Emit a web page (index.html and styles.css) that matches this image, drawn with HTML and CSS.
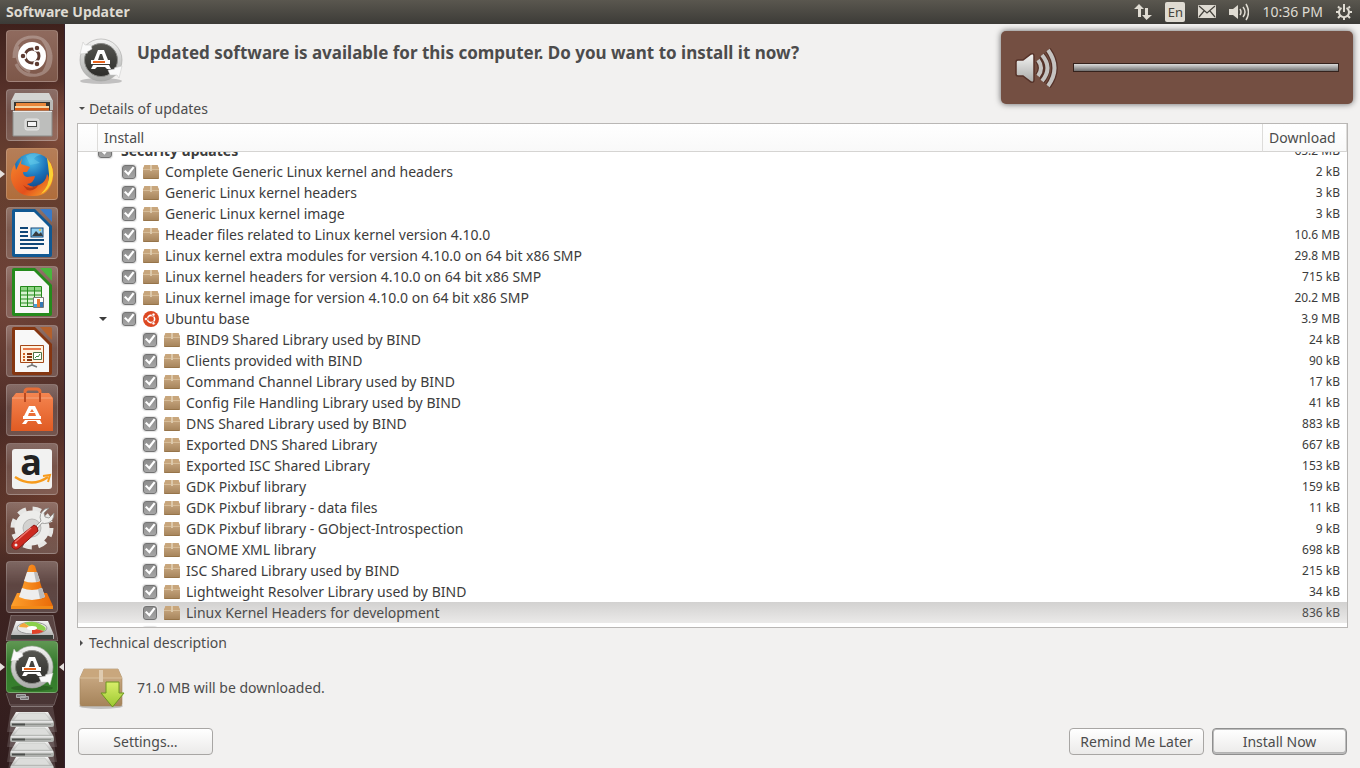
FILE: index.html
```html
<!DOCTYPE html>
<html lang="en">
<head>
    <meta charset="UTF-8">
    <meta name="viewport" content="width=device-width, initial-scale=1.0">
    <title>Software Updater</title>
    <link rel="stylesheet" href="styles.css">
</head>
<body>
    <!-- shared icons and gradients -->
    <svg class="defs" width="0" height="0" aria-hidden="true">
        <defs>
            <linearGradient id="boxGrad" x1="0" y1="0" x2="0" y2="1"><stop offset="0" stop-color="#d0b08a"/><stop offset="1" stop-color="#a5835a"/></linearGradient>
            <linearGradient id="metal" x1="0" y1="0" x2="0" y2="1"><stop offset="0" stop-color="#f4f4f3"/><stop offset="1" stop-color="#a9aaa8"/></linearGradient>
            <linearGradient id="dark" x1="0" y1="0" x2="0" y2="1"><stop offset="0" stop-color="#555550"/><stop offset="1" stop-color="#2d2d2a"/></linearGradient>
            <linearGradient id="bag" x1="0" y1="0" x2="0" y2="1"><stop offset="0" stop-color="#f58550"/><stop offset="1" stop-color="#e05b23"/></linearGradient>
            <radialGradient id="globe" cx=".45" cy=".2" r=".8"><stop offset="0" stop-color="#4cc3ea"/><stop offset=".5" stop-color="#1a70b8"/><stop offset="1" stop-color="#123a75"/></radialGradient>
            <linearGradient id="fox" x1="0" y1="0" x2="1" y2="1"><stop offset="0" stop-color="#f6882c"/><stop offset=".6" stop-color="#e4501c"/><stop offset="1" stop-color="#f9b02c"/></linearGradient>
            <linearGradient id="cone" x1="0" y1="0" x2="1" y2="0"><stop offset="0" stop-color="#ffa02c"/><stop offset="1" stop-color="#e96a08"/></linearGradient>
            <linearGradient id="green" x1="0" y1="0" x2="0" y2="1"><stop offset="0" stop-color="#d9ee6a"/><stop offset="1" stop-color="#9cc830"/></linearGradient>
        </defs>
        <symbol id="package" viewBox="0 0 16 14">
            <path d="M1.500 0h13L16 4v9q0 1-1 1H1q-1 0-1-1V4z" fill="url(#boxGrad)"/>
            <path d="M1.500 0h13L16 4H0z" fill="#c8a67c"/>
            <path d="M0 4.500h16" stroke="#d6bc98"/>
            <path d="M7 0h2v6H7z" fill="#dcc8aa"/>
            <path d="M.5 13.500h15" stroke="#967449"/>
        </symbol>
        <symbol id="ubuntu" viewBox="0 0 16 16">
            <circle cx="8" cy="8" r="8" fill="#dd4822"/>
            <circle cx="8" cy="8" r="3.600" fill="none" stroke="#fff" stroke-width="1.600"/>
            <g fill="#fff" stroke="#dd4822" stroke-width=".7"><circle cx="3" cy="8" r="1.600"/><circle cx="10.500" cy="3.700" r="1.600"/><circle cx="10.500" cy="12.300" r="1.600"/></g>
        </symbol>
        <symbol id="updater" viewBox="0 0 46 48">
            <ellipse cx="23" cy="44" rx="21" ry="3" fill="#000" opacity=".2"/>
            <circle cx="23" cy="23" r="21" fill="url(#metal)" stroke="#a5a5a3" stroke-width=".6"/>
            <circle cx="23" cy="23" r="16.500" fill="url(#dark)" stroke="#8a8a87"/>
            <path d="M2 17L5 5l2 3 6 0 1 4-5 3 1 1z" fill="#fafafa" stroke="#c6c6c4" stroke-width=".5"/>
            <path d="M44 29l-3 12-2-3-7 0-2-5 7-1-1-1z" fill="#fafafa" stroke="#c6c6c4" stroke-width=".5"/>
            <path d="M20 13h6l4 10h-4l-1-3h-4l-1 3h-4zm2 4-1 3h4l-1-3z" fill="#fff" fill-rule="evenodd"/>
            <path d="M13 23h19v4H13z" fill="#fff"/><path d="M15 24h12v2H15z" fill="#e8631c"/>
            <path d="M15 28h16l2 4h-4l-2-2h-8l-2 2h-4z" fill="#fff"/>
        </symbol>
        <symbol id="drive" viewBox="0 0 46 18">
            <path d="M7 2h32l6 10H1z" fill="url(#metal)"/>
            <path d="M10 3h26l5 7H5z" fill="#dcdddb" stroke="#c1c2bf" stroke-width=".6"/>
            <path d="M1 12h44v3q0 2-2 2H3q-2 0-2-2z" fill="#a4a6a2"/>
            <path d="M2 12h42" stroke="#fff"/>
            <path d="M3 14.500h13" stroke="#2d302d" stroke-width="2"/>
            <path d="M16 14.500h26" stroke="#7d807c"/>
        </symbol>
        <symbol id="drive-tile" viewBox="0 0 52 26">
            <path d="M5 0h42l4 26H1z" fill="#fff" opacity=".14"/>
            <path d="M5 .5h42" stroke="#fff" opacity=".3"/>
            <use href="#drive" x="3" y="4" width="46" height="18"/>
        </symbol>
    </svg>

    <header class="panel">
        <h1 class="panel-title">Software Updater</h1>
        <div class="indicators">
            <svg width="18" height="18" viewBox="0 0 18 18" fill="#dfdbd2"><path d="M5 1l5 5H7v8H4V6H0zM11 5h3v7h4l-5.500 5L8 12h3z"/></svg>
            <span class="lang">En</span>
            <svg width="18" height="14" viewBox="0 0 18 14"><rect width="18" height="13" rx="1" fill="#dfdbd2"/><path d="M1 1l8 7 8-7M1 12l5-6M17 12l-5-6" fill="none" stroke="#45433d" stroke-width="1.200"/></svg>
            <svg width="20" height="18" viewBox="0 0 20 18"><path d="M0 6h4l5-4v14l-5-4H0z" fill="#dfdbd2"/><path d="M11 6q2 3 0 6M14 4q4 5 0 10M17 1q5 8 0 16" fill="none" stroke="#dfdbd2" stroke-width="1.500"/></svg>
            <time class="clock">10:36 PM</time>
            <svg width="16" height="16" viewBox="0 0 16 16" fill="none" stroke="#dfdbd2" stroke-width="2"><path d="M5.500 3.800a5 5 0 1 0 5 0M8 0v8M3.500 4L2 2.500M12.500 4L14 2.500M3 8H0M13 8h3M4 12l-2 2M12 12l2 2M8 13v3"/></svg>
        </div>
    </header>

    <div class="desktop">
        <nav class="launcher" aria-label="Launcher">
            <a class="tile bfb" href="#" aria-label="Dash">
                <svg viewBox="0 0 52 52"><g fill="none" stroke="#fff" opacity=".25"><path d="M8 28Q8 7 27 7q15 0 18 18M10 34q6 13 21 11 15-3 14-20M12 16q-5 18 12 26M36 9q13 16 1 34" stroke-width="3"/></g><circle cx="26" cy="26" r="14" fill="#fff"/><circle cx="26" cy="26" r="7" fill="none" stroke="#5d3b31" stroke-width="3"/><g fill="#5d3b31" stroke="#fff" stroke-width="1.500"><circle cx="17" cy="26" r="3"/><circle cx="31" cy="18" r="3"/><circle cx="31" cy="34" r="3"/></g></svg>
            </a>
            <a class="tile" href="#" aria-label="Files">
                <svg viewBox="0 0 52 52"><path d="M9 4h34l4 8H5z" fill="#d3d4d2"/><path d="M5 11h42v10H5z" fill="#b9bab7"/><path d="M8 13h36v9H8z" fill="#383632"/><path d="M10 14h30v6H10z" fill="#e9873b"/><path d="M9 17h34v2H9z" fill="#f6d5a4"/><path d="M9 19h34v3H9z" fill="#d75b16"/><path d="M7 22h39v25H7z" fill="#bdbebc" stroke="#8b8c89"/><path d="M7 22.500h39" stroke="#e9e9e8"/><rect x="19" y="30" width="14" height="11" rx="2" fill="#d3d4d2" stroke="#e6e6e5"/><rect x="21.500" y="32.500" width="9" height="5" fill="#f4f4f4" stroke="#474845"/></svg>
            </a>
            <a class="tile firefox running" href="#" aria-label="Firefox">
                <svg viewBox="0 0 52 52"><circle cx="27" cy="25" r="20" fill="url(#globe)"/><path d="M20 8q7-5 16-1-6 0-8 4l6 4-10 2z" fill="#62c4e6" opacity=".6"/><path d="M42 11q7 8 5 20-4 18-21 17Q9 48 5 31q-1-8 4-15l1 6 6-12-1 6 6 2 3 1-3 5h-4q0 4 4 5l8-1q-1 7-8 8 6 5 12 1 7-3 8-11 3 4 1 8 5-7 3-16z" fill="url(#fox)"/><path d="M41 10q9 11 5 23-3 9-11 13 9-9 8-20l-1-9z" fill="#fbd033"/><path d="M17 37q7 6 16-1-4 8-12 6z" fill="#b83b16"/></svg>
            </a>
            <a class="tile" href="#" aria-label="LibreOffice Writer">
                <svg viewBox="0 0 52 52"><path d="M6 4q0-2 2-2h21l17 17v29q0 2-2 2H8q-2 0-2-2z" fill="#115892"/><path d="M34 2h10q2 0 2 2v11z" fill="#3a7ac7"/><path d="M9 5h19l15 15v27H9z" fill="#f8f8f8"/><path d="M14 21h8M14 25h8M14 29h8M14 33h24M14 37h24M14 41h18" stroke="#104778" stroke-width="2"/><rect x="25" y="21" width="12" height="9" fill="#8fd0f3" stroke="#104778"/><path d="M26 29l4-5 3 3 2-2 2 4z" fill="#383c40"/><circle cx="34" cy="23" r="1" fill="#f6c32e"/></svg>
            </a>
            <a class="tile" href="#" aria-label="LibreOffice Calc">
                <svg viewBox="0 0 52 52"><path d="M6 4q0-2 2-2h21l17 17v29q0 2-2 2H8q-2 0-2-2z" fill="#258a1c"/><path d="M34 2h10q2 0 2 2v11z" fill="#49b53d"/><path d="M9 5h19l15 15v27H9z" fill="#f8f8f8"/><path d="M14 21h22v20H14z" fill="#d8f2d0"/><path d="M14 21h22v4H14z" fill="#8fd585"/><path d="M14.500 20.500h21v20h-21zM14 25h22M14 29h22M14 33h22M14 37h22M21.500 21v20M28.500 21v20" fill="none" stroke="#258a1c"/><path d="M27.500 31.500h10v10h-10z" fill="#fff" stroke="#777"/><path d="M28 38h3v3h-3z" fill="#42a4dc"/><path d="M31 33h3v8h-3z" fill="#e87a32"/><path d="M34 36h3v5h-3z" fill="#3578b5"/></svg>
            </a>
            <a class="tile" href="#" aria-label="LibreOffice Impress">
                <svg viewBox="0 0 52 52"><path d="M6 4q0-2 2-2h21l17 17v29q0 2-2 2H8q-2 0-2-2z" fill="#853611"/><path d="M34 2h10q2 0 2 2v11z" fill="#b3602c"/><path d="M9 5h19l15 15v27H9z" fill="#f8f8f8"/><path d="M14.500 20.500h23v17h-23z" fill="#fff3df" stroke="#a54819"/><path d="M17 24h18" stroke="#e87a4d" stroke-width="2"/><path d="M17 29h2M17 32h2M17 35h2" stroke="#d1611e" stroke-width="2"/><path d="M21 29h5M21 32h5M21 35h5" stroke="#863913" stroke-width="2"/><path d="M27.500 27.500h8v7h-8z" fill="#fff" stroke="#4c7247"/><path d="M29 33l2-2 1 1 2-3" fill="none" stroke="#39883b"/><path d="M26 38v2l-5 2M26 40l5 2" fill="none" stroke="#777" stroke-width="1.500"/></svg>
            </a>
            <a class="tile" href="#" aria-label="Ubuntu Software">
                <svg viewBox="0 0 52 52"><path d="M19 18V8q0-3 3-3h9q3 0 3 3v10" fill="none" stroke="#e66d37" stroke-width="3"/><path d="M6 14l4-5h33l4 5v33H5z" fill="url(#bag)"/><path d="M6 14h40" stroke="#f5a57f"/><path d="M19 18V9M34 18V9" stroke="#ba4920" stroke-width="2"/><path d="M23 22h6l5 10h-4l-1-3h-6l-1 3h-4zm3 3-2 3h4z" fill="#fff" fill-rule="evenodd"/><path d="M17 32h18v3H17z" fill="#fff"/><path d="M19 36h15l2 4h-4l-2-3h-8l-2 3h-4z" fill="#fff"/></svg>
            </a>
            <a class="tile amazon" href="#" aria-label="Amazon">
                <svg viewBox="0 0 52 52"><rect x="6" y="6" width="40" height="40" rx="3" fill="#f2f2f1"/><text x="25" y="32" text-anchor="middle">a</text><path d="M9 34q17 11 33 0" fill="none" stroke="#f79b1c" stroke-width="2.500"/><path d="M37 33l7-1-2 7" fill="none" stroke="#f79b1c" stroke-width="2"/></svg>
            </a>
            <a class="tile" href="#" aria-label="System Settings">
                <svg viewBox="0 0 52 52"><circle cx="26" cy="26" r="18" fill="none" stroke="#e6e6e4" stroke-width="7" stroke-dasharray="8 6.140"/><circle cx="26" cy="26" r="13" fill="none" stroke="#ececea" stroke-width="9"/><circle cx="26" cy="26" r="9" fill="#d3d2d0" stroke="#b9b9b7"/><path d="M27 27l8-8q-3-7 4-12l4-1-5 5 1 4 4 1 5-5q0 8-6 10-4 1-6 0l-6 7z" fill="#eeeeec" stroke="#8d8d8a" stroke-width=".8"/><path d="M28 23q4 1 4 6L13 46q-4 3-7-1-1-3 2-6z" fill="#cc2a20" stroke="#8e1713"/><path d="M9 40l16-14" stroke="#ec796e" stroke-width="1.500"/><circle cx="10" cy="43" r="1.500" fill="#eee"/></svg>
            </a>
            <a class="tile" href="#" aria-label="VLC media player">
                <svg viewBox="0 0 52 52"><path d="M11 32h30l6 13v3H5v-3z" fill="url(#cone)"/><path d="M5 45h42v3H5z" fill="#f18a18"/><path d="M23 5q3-3 6 0l10 32q-13 7-26 0z" fill="url(#cone)"/><path d="M21 11h10l3 9q-8 3-16 0z" fill="#eee"/><path d="M16 27q10 4 20 0l3 9q-13 6-26 0z" fill="#eee"/><path d="M28 11h3l3 9-4 1zM32 28l4-1 3 9-5 2z" fill="#bbb"/></svg>
            </a>
            <a class="fold disks" href="#" aria-label="Disks">
                <svg viewBox="0 0 52 26"><path d="M5 0h42l5 26H0z" fill="#fff" opacity=".16"/><path d="M5 0h42l5 26H0z" fill="none" stroke="#fff" opacity=".25"/><path d="M10 6h32l6 14v4H5v-4z" fill="url(#metal)"/><path d="M5 20h42v4H5z" fill="#3b3f3b"/><ellipse cx="26" cy="13" rx="15" ry="6" fill="#e9e9e7" stroke="#999"/><path d="M26 13L18 8q9-3 16 1 9 4 4 7z" fill="#8bd04c"/><path d="M26 13l12 3q-4 3-12 3z" fill="#e14329"/><path d="M26 13l-13-1q1-3 5-4z" fill="#f4a63a"/><ellipse cx="26" cy="13" rx="5" ry="2" fill="#fff"/></svg>
            </a>
            <a class="tile active running" href="#" aria-label="Software Updater">
                <svg viewBox="0 0 52 52"><use href="#updater" x="3" y="3" width="46" height="48"/></svg>
            </a>
            <a class="fold stub" href="#" aria-label="Workspace Switcher">
                <svg viewBox="0 0 52 13"><path d="M0 0h52l-4 13H4z" fill="#fff" opacity=".1"/><path d="M0 0l4 12h44l4-12" fill="none" stroke="#fff" opacity=".2"/><path d="M10.500 1.500h9v3h-9zM14.500 3.500h8v3h-8z" fill="#777" stroke="#aaa"/></svg>
            </a>
            <a class="fold" href="#" aria-label="Volume 1"><svg viewBox="0 0 52 26"><use href="#drive-tile"/></svg></a>
            <a class="fold" href="#" aria-label="Volume 2"><svg viewBox="0 0 52 26"><use href="#drive-tile"/></svg></a>
            <a class="fold" href="#" aria-label="Volume 3"><svg viewBox="0 0 52 26"><use href="#drive-tile"/></svg></a>
            <a class="fold" href="#" aria-label="Volume 4"><svg viewBox="0 0 52 26"><use href="#drive-tile"/></svg></a>
        </nav>

        <main class="window">
            <div class="intro">
                <svg width="46" height="48"><use href="#updater"/></svg>
                <h2>Updated software is available for this computer. Do you want to install it now?</h2>
            </div>

            <button class="expander" aria-expanded="true"><svg width="6" height="6" viewBox="0 0 6 6"><path d="M0 1h6L3 4z" fill="#4c4c4c"/></svg>Details of updates</button>

            <div class="updates" id="updates">
                <table>
                    <thead>
                        <tr>
                            <th class="col-arrow"></th>
                            <th class="col-name">Install</th>
                            <th class="col-size">Download</th>
                        </tr>
                    </thead>
                    <tbody id="updateRows"></tbody>
                </table>
            </div>

            <button class="expander technical" aria-expanded="false"><svg width="6" height="6" viewBox="0 0 6 6"><path d="M1 0v6l3-3z" fill="#4c4c4c"/></svg>Technical description</button>

            <div class="summary">
                <svg width="46" height="42" viewBox="0 0 46 42">
                    <ellipse cx="22" cy="39" rx="22" ry="3" fill="#000" opacity=".2"/>
                    <path d="M5 2h34l4 9v26q0 2-2 2H3q-2 0-2-2V11z" fill="url(#boxGrad)" stroke="#a1835d" stroke-width=".6"/>
                    <path d="M5 2h34l4 9H1z" fill="#c9a77d"/><path d="M1 11h42" stroke="#d8bf9c"/><path d="M20 3h4v12h-4z" fill="#dfcbb0"/>
                    <path d="M27 15h13v11h5L33.500 40 22 26h5z" fill="url(#green)" stroke="#6c9720"/>
                </svg>
                <p>71.0 MB will be downloaded.</p>
            </div>

            <div class="actions">
                <button class="btn">Settings…</button>
                <button class="btn later">Remind Me Later</button>
                <button class="btn default">Install Now</button>
            </div>
        </main>
    </div>

    <div class="osd">
        <svg width="46" height="44" viewBox="0 0 46 44" stroke="#553229">
            <path d="M3 14h5l8-6q3-1 3 2v24q0 3-3 2l-8-6H3q-2 0-2-2V16q0-2 2-2z" fill="url(#metal)" stroke-width="1.500"/>
            <g fill="none" stroke-width="6.500"><path d="M23 14q6 8 0 16M27 9q10 13 0 26M33 4q13 18 0 36"/></g>
            <g fill="none" stroke="#c5c3c1" stroke-width="4"><path d="M23 14q6 8 0 16M27 9q11 13 0 26M33 4q13 18 0 36"/></g>
        </svg>
        <progress value="100" max="100" aria-label="Volume"></progress>
    </div>

    <script>
        // [level, name, size, icon]
        const updates = [
            [0, 'Security updates', '65.2 MB', ''],
            [1, 'Complete Generic Linux kernel and headers', '2 kB', 'package'],
            [1, 'Generic Linux kernel headers', '3 kB', 'package'],
            [1, 'Generic Linux kernel image', '3 kB', 'package'],
            [1, 'Header files related to Linux kernel version 4.10.0', '10.6 MB', 'package'],
            [1, 'Linux kernel extra modules for version 4.10.0 on 64 bit x86 SMP', '29.8 MB', 'package'],
            [1, 'Linux kernel headers for version 4.10.0 on 64 bit x86 SMP', '715 kB', 'package'],
            [1, 'Linux kernel image for version 4.10.0 on 64 bit x86 SMP', '20.2 MB', 'package'],
            [1, 'Ubuntu base', '3.9 MB', 'ubuntu'],
            [2, 'BIND9 Shared Library used by BIND', '24 kB', 'package'],
            [2, 'Clients provided with BIND', '90 kB', 'package'],
            [2, 'Command Channel Library used by BIND', '17 kB', 'package'],
            [2, 'Config File Handling Library used by BIND', '41 kB', 'package'],
            [2, 'DNS Shared Library used by BIND', '883 kB', 'package'],
            [2, 'Exported DNS Shared Library', '667 kB', 'package'],
            [2, 'Exported ISC Shared Library', '153 kB', 'package'],
            [2, 'GDK Pixbuf library', '159 kB', 'package'],
            [2, 'GDK Pixbuf library - data files', '11 kB', 'package'],
            [2, 'GDK Pixbuf library - GObject-Introspection', '9 kB', 'package'],
            [2, 'GNOME XML library', '698 kB', 'package'],
            [2, 'ISC Shared Library used by BIND', '215 kB', 'package'],
            [2, 'Lightweight Resolver Library used by BIND', '34 kB', 'package'],
            [2, 'Linux Kernel Headers for development', '836 kB', 'package'],
            [2, '', '', 'package']
        ];
        const selected = 22;

        const body = document.getElementById('updateRows');
        updates.forEach(([level, name, size, icon], i) => {
            const row = document.createElement('tr');
            row.className = 'level-' + level + (i === selected ? ' selected' : '');
            const arrow = icon === 'ubuntu'
                ? '<button class="toggle" aria-label="Collapse Ubuntu base"><svg width="8" height="4" viewBox="0 0 8 4"><path d="M0 0h8L4 4z" fill="#3c3c3c"/></svg></button>'
                : '';
            const image = icon ? `<svg class="${icon}" width="16" height="16"><use href="#${icon}"/></svg>` : '';
            row.innerHTML = `
                <td></td>
                <td class="name"><div class="cell">${arrow}<label><input type="checkbox" checked>${image}<span>${name}</span></label></div></td>
                <td class="size">${size}</td>
            `;
            body.appendChild(row);
        });

        document.getElementById('updates').scrollTop = 12;
    </script>
</body>
</html>
```
FILE: styles.css
```css
* {
    box-sizing: border-box;
}
body {
    font-family: "Noto Sans", "Open Sans", sans-serif;
    font-size: 14px;
    line-height: 20px;
    color: #4c4c4c;
    margin: 0;
    height: 100vh;
    display: flex;
    flex-direction: column;
    overflow: hidden;
    background: #f2f1f0;
}
svg {
    display: block;
    flex-shrink: 0;
}
.defs {
    position: absolute;
}
button {
    font: inherit;
    color: inherit;
    cursor: pointer;
}

/* top panel */
.panel {
    height: 24px;
    flex-shrink: 0;
    display: flex;
    align-items: center;
    justify-content: space-between;
    padding: 0 8px 0 6px;
    background: linear-gradient(#5a574f, #3c3b37);
    color: #dfdbd2;
}
.panel-title {
    margin: 0;
    font-size: 14px;
}
.indicators {
    display: flex;
    align-items: center;
    gap: 13px;
}
.lang {
    width: 20px;
    height: 20px;
    border-radius: 2px;
    background: #dfdbd2;
    color: #45433d;
    font-size: 13px;
    text-align: center;
}

.desktop {
    flex: 1;
    display: flex;
    min-height: 0;
}

/* launcher */
.launcher {
    width: 65px;
    flex-shrink: 0;
    padding: 6px 6px 0;
    overflow: hidden;
    border-right: 1px solid #35222e;
    background:
        radial-gradient(circle at 100% 14%, rgba(170, 100, 75, 0.5), transparent 50px),
        radial-gradient(circle at 10% 38%, rgba(125, 75, 62, 0.6), transparent 110px),
        radial-gradient(circle at 90% 62%, rgba(140, 78, 55, 0.4), transparent 90px),
        linear-gradient(#3f211c, #5d362d 12%, #68402f 20%, #5f3a31 35%, #4a2a25 55%, #573329 68%, #3d2321 78%, #301c1d);
}
.tile {
    position: relative;
    display: block;
    height: 52px;
    margin-bottom: 7px;
    border-radius: 4px;
    border: 1px solid rgba(255, 255, 255, 0.18);
    background: linear-gradient(rgba(255, 255, 255, 0.28), rgba(255, 255, 255, 0.14) 45%, rgba(255, 255, 255, 0.18));
}
.tile svg {
    width: 52px;
    height: 52px;
    margin: -1px;
}
.bfb {
    background: linear-gradient(#8f6a5e, #7d5749);
}
.firefox {
    background: linear-gradient(#b57e58, #b06d3b);
}
.active {
    margin-bottom: 0;
    background: linear-gradient(#5f9652, #33792b 45%, #37802d);
}
.running::before,
.active::after {
    content: "";
    position: absolute;
    top: 21px;
    border: 4px solid transparent;
}
.running::before {
    left: -7px;
    border-left: 5px solid #e6e1de;
    border-right: 0;
}
.active::after {
    right: -7px;
    border-right: 5px solid #e6e1de;
    border-left: 0;
}
.amazon text {
    font: bold 36px/36px "Open Sans", sans-serif;
    fill: #222;
}
.fold {
    display: block;
    height: 15px;
}
.fold svg {
    width: 52px;
}
.disks {
    height: 26px;
    margin-top: -5px;
}
.stub {
    height: 13px;
}

/* updater window */
.window {
    flex: 1;
    min-width: 0;
    display: flex;
    flex-direction: column;
    align-items: stretch;
    padding: 13px 12px 13px;
}
.intro {
    display: flex;
    gap: 13px;
    padding-left: 1px;
}
.intro h2 {
    margin: 4px 0 0;
    font-size: 17px;
    line-height: 24px;
}
.expander {
    display: flex;
    align-items: center;
    align-self: flex-start;
    gap: 4px;
    margin: 14px 0 4px;
    padding: 0 0 0 2px;
    border: 0;
    background: none;
}
.technical {
    margin: 5px 0 14px;
}
.updates {
    flex: 1;
    min-height: 0;
    overflow: auto;
    scrollbar-width: none;
    border: 1px solid #b9b7b5;
    background: #fff;
    color: #3c3c3c;
}
table {
    width: 100%;
    table-layout: fixed;
    border-collapse: separate;
    border-spacing: 0;
}
th {
    position: sticky;
    top: 0;
    z-index: 1;
    height: 28px;
    padding: 0 6px;
    border-bottom: 1px solid #d5d4d2;
    border-right: 1px solid #dddcda;
    background: linear-gradient(#fff, #f9f9f9);
    color: #4c4c4c;
    font-weight: normal;
    text-align: left;
}
.col-arrow {
    width: 20px;
}
.col-size {
    width: 84px;
}
td {
    height: 21px;
    padding: 0;
    line-height: 21px;
    white-space: nowrap;
}
.cell,
.cell label {
    display: flex;
    align-items: center;
    height: 21px;
}
.cell label svg {
    margin: 0 6px 0 7px;
}
.cell .package {
    height: 14px;
}
.level-0 span {
    margin-left: 9px;
    font-weight: bold;
}
.level-1 .cell {
    padding-left: 24px;
}
.level-2 .cell {
    padding-left: 45px;
}
.toggle {
    width: 24px;
    margin-left: -24px;
    padding: 0 0 0 1px;
    border: 0;
    background: none;
}
input[type="checkbox"] {
    appearance: none;
    width: 14px;
    height: 14px;
    margin: 0;
    border: 1px solid #737373;
    border-radius: 3px;
    background: linear-gradient(#8c8c8c, #a6a6a6);
    box-shadow: 0 0 1px 1px #e2e2e2;
}
input[type="checkbox"]::after {
    content: "";
    display: block;
    height: 12px;
    background: #fff;
    clip-path: polygon(8% 48%, 22% 38%, 42% 58%, 82% 8%, 96% 18%, 46% 86%);
}
.size {
    padding-right: 7px;
    font-size: 12px;
    text-align: right;
}
.selected td {
    background: linear-gradient(#d2d1d0, #ebeae9);
    color: #4c4c4c;
}
.summary {
    display: flex;
    align-items: center;
    gap: 12px;
    padding-left: 2px;
}
.summary p {
    margin: 0;
}
.actions {
    display: flex;
    gap: 8px;
    margin-top: 19px;
    padding: 0 1px;
}
.btn {
    width: 135px;
    height: 27px;
    padding: 0;
    border: 1px solid #a8a6a4;
    border-radius: 4px;
    background: linear-gradient(#fff, #ebeae9);
}
.later {
    margin-left: auto;
}
.default {
    border-color: #8f8f8f;
    box-shadow: inset 0 0 0 1px #bcbcbc, inset 0 -1px 0 1px #b2b2b2;
}

/* volume bubble floating over the window */
.osd {
    position: absolute;
    top: 31px;
    right: 7px;
    width: 352px;
    height: 73px;
    display: flex;
    align-items: center;
    gap: 12px;
    padding: 0 14px;
    border-radius: 5px;
    background: #744f42;
    box-shadow: 0 0 6px rgba(0, 0, 0, 0.6);
}
progress {
    appearance: none;
    flex: 1;
    min-width: 0;
    height: 9px;
    border: 1px solid #35221c;
}
progress::-webkit-progress-bar {
    background: #744f42;
}
progress::-webkit-progress-value {
    background: linear-gradient(#dcdcdb, #6f6f6f);
}
```
